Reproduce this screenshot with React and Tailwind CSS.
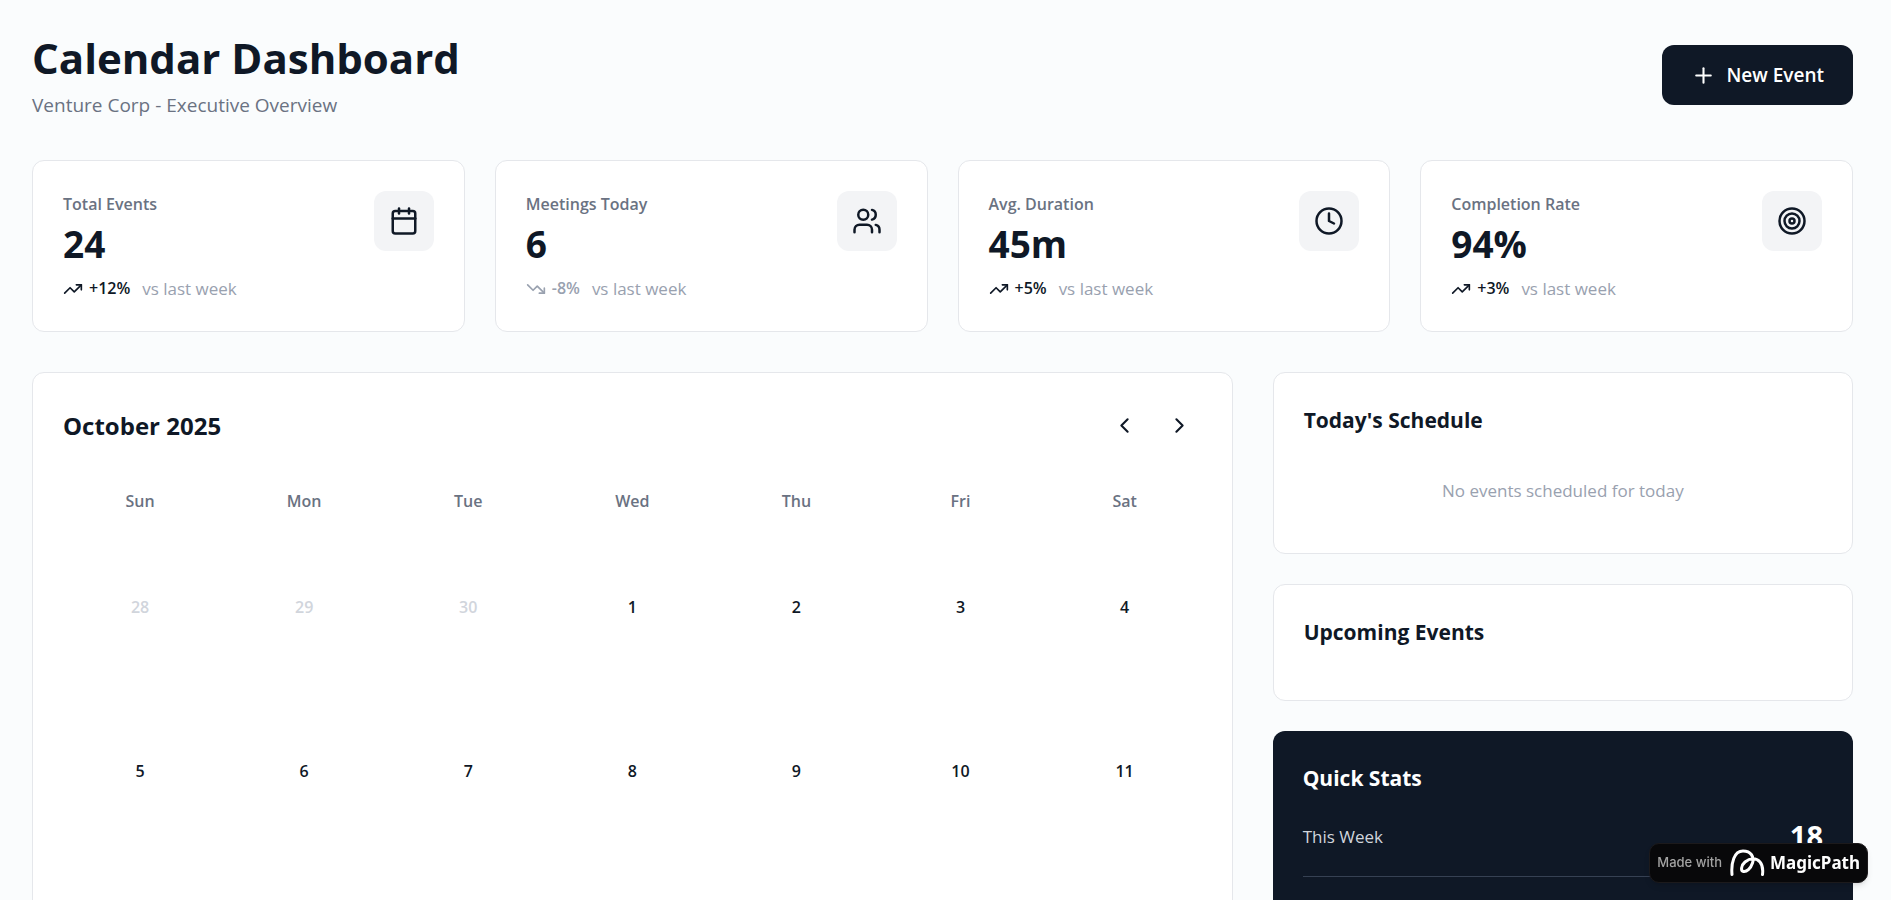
import { Calendar, Users, Clock, Target, Plus, TrendingUp, TrendingDown, ChevronLeft, ChevronRight } from "lucide-react";

const STATS = [
    { label: "Total Events", value: "24", change: "+12%", up: true, icon: Calendar },
    { label: "Meetings Today", value: "6", change: "-8%", up: false, icon: Users },
    { label: "Avg. Duration", value: "45m", change: "+5%", up: true, icon: Clock },
    { label: "Completion Rate", value: "94%", change: "+3%", up: true, icon: Target },
];

const WEEKDAYS = ["Sun", "Mon", "Tue", "Wed", "Thu", "Fri", "Sat"];

const QUICK_STATS = [
    { label: "This Week", value: "18" },
    { label: "This Month", value: "72" },
];

// October 2025 starts on a Wednesday, so three days of September lead the grid
const DAYS = [
    ...[28, 29, 30].map((day) => ({ day, key: `sep-${day}`, outside: true })),
    ...Array.from({ length: 31 }, (_, i) => ({ day: i + 1, key: `oct-${i + 1}`, outside: false })),
    { day: 1, key: "nov-1", outside: true },
];

const StatCard = ({ label, value, change, up, icon: Icon }) => {
    const Trend = up ? TrendingUp : TrendingDown;

    return (
        <div className="flex items-start justify-between rounded-xl border border-gray-200 bg-white p-[30px]">
            <div>
                <p className="mb-1 text-[16px] leading-[26px] font-semibold text-gray-500">{label}</p>
                <p className="mb-[10px] text-[37px] leading-[45px] font-bold">{value}</p>
                <div className="flex items-center leading-[25px]">
                    <Trend size={20} className={up ? "mr-[6px]" : "mr-[6px] text-gray-400"} />
                    <span className={up ? "text-[16px] font-semibold" : "text-[16px] font-semibold text-gray-400"}>{change}</span>
                    <span className="ml-3 text-[17px] text-gray-400">vs last week</span>
                </div>
            </div>
            <div className="flex size-[60px] items-center justify-center rounded-xl bg-gray-100">
                <Icon size={30} />
            </div>
        </div>
    );
};

const MonthCalendar = () => (
    <section className="col-span-2 rounded-xl border border-gray-200 bg-white p-[30px]">
        <div className="mb-[30px] flex items-center justify-between">
            <h2 className="text-[24px] leading-[45px] font-bold">October 2025</h2>
            <div className="flex gap-[10px]">
                <button aria-label="Previous month" className="flex size-[45px] items-center justify-center rounded-lg hover:bg-gray-100">
                    <ChevronLeft size={25} />
                </button>
                <button aria-label="Next month" className="flex size-[45px] items-center justify-center rounded-lg hover:bg-gray-100">
                    <ChevronRight size={25} />
                </button>
            </div>
        </div>

        {/* Weekday names */}
        <div className="mb-[6px] grid grid-cols-7 gap-[10px]">
            {WEEKDAYS.map((name) => (
                <div key={name} className="py-[10px] text-center text-[16px] leading-[26px] font-semibold text-gray-500">
                    {name}
                </div>
            ))}
        </div>

        {/* Days */}
        <div className="grid grid-cols-7 gap-[10px]">
            {DAYS.map(({ day, key, outside }) => (
                <button
                    key={key}
                    className={`aspect-square rounded-lg text-[16px] leading-[26px] font-semibold hover:bg-gray-50 ${outside ? "text-gray-300" : "text-[#0f1826]"}`}
                >
                    {day}
                </button>
            ))}
        </div>
    </section>
);

const MagicPathBadge = () => (
    <a
        href="#magicpath"
        className="fixed right-[23px] bottom-[17px] flex h-10 items-center rounded-[10px] border border-[#1c1a1c] bg-[#08080a] px-[7px] shadow-md"
    >
        <span className="font-['Inter'] text-[13px] font-medium text-[#a3a3a3]">Made with</span>
        <svg viewBox="0 0 36 28" className="ml-2 h-7 w-9" fill="none" stroke="white" strokeWidth="3" strokeLinecap="round">
            <path d="M2 25.5C1 14 4 2 13 2C21 2 24.5 8 22.5 14C20.5 20 16.5 23 13.5 22.5C10.500 22 11 16.500 15 13C20 9 26 8.500 30 13C32.500 16 33.200 20 32.500 25.500" />
        </svg>
        <span className="ml-1 font-['Noto_Sans'] text-[17px] font-bold text-white">MagicPath</span>
    </a>
);

export default function App() {
    return (
        <div className="min-h-screen bg-[#fafcfd] pt-[30px] pr-[38px] pb-[30px] pl-8 font-['Open_Sans','Noto_Sans',sans-serif] text-[#0f1826]">
            <header className="mb-10 flex items-center justify-between">
                <div>
                    <h1 className="mb-1 text-[42px] leading-[56px] font-bold">Calendar Dashboard</h1>
                    <p className="text-[19px] leading-[30px] text-gray-500">Venture Corp - Executive Overview</p>
                </div>
                <button className="flex h-[60px] items-center gap-[10px] rounded-xl bg-[#0f1826] px-[29px] text-[19px] font-semibold text-white">
                    <Plus size={25} />
                    New Event
                </button>
            </header>

            <div className="mb-10 grid grid-cols-4 gap-[30px]">
                {STATS.map((stat) => (
                    <StatCard key={stat.label} {...stat} />
                ))}
            </div>

            <div className="grid grid-cols-3 gap-10">
                <MonthCalendar />

                <aside className="flex flex-col gap-[30px]">
                    <section className="rounded-xl border border-gray-200 bg-white p-[30px]">
                        <h3 className="mb-5 text-[21px] leading-[35px] font-bold">Today's Schedule</h3>
                        <p className="py-5 text-center text-[17px] leading-[25px] text-gray-400">No events scheduled for today</p>
                    </section>

                    <section className="rounded-xl border border-gray-200 bg-white p-[30px]">
                        <h3 className="mb-5 text-[21px] leading-[35px] font-bold">Upcoming Events</h3>
                    </section>

                    <section className="rounded-xl bg-[#0f1826] p-[30px] text-white">
                        <h3 className="mb-5 text-[21px] leading-[35px] font-bold">Quick Stats</h3>
                        <dl className="flex flex-col gap-5">
                            {QUICK_STATS.map(({ label, value }) => (
                                <div key={label} className="flex items-center justify-between border-b border-gray-700 pb-5">
                                    <dt className="text-[17px] leading-[25px] text-gray-300">{label}</dt>
                                    <dd className="text-[29px] leading-10 font-bold">{value}</dd>
                                </div>
                            ))}
                        </dl>
                    </section>
                </aside>
            </div>

            <MagicPathBadge />
        </div>
    );
}
